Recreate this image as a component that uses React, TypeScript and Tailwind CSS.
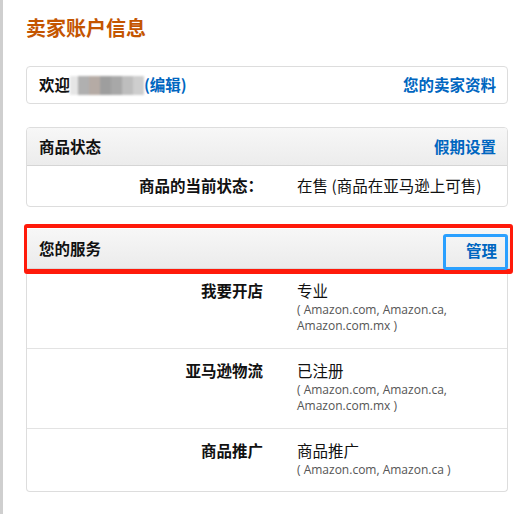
import React from 'react';

const font = { fontFamily: '"Noto Sans CJK SC", "Liberation Sans", sans-serif' };

interface ServiceRowProps {
  label: string;
  value: string;
  sites: string[];
  first?: boolean;
  last?: boolean;
}

const ServiceRow: React.FC<ServiceRowProps> = ({ label, value, sites, first, last }) => (
  <div
    className={`flex ${first ? 'pt-[5px]' : 'pt-[10px]'} ${last ? 'pb-[13px]' : 'pb-[14px] border-b border-[#e3e3e3]'}`}
  >
    <div className="w-[236px] text-right font-bold text-[15.5px] leading-[22px] text-[#111]">{label}</div>
    <div className="ml-[34px]">
      <div className="text-[15.5px] leading-[22px] text-[#111] mb-[1px]">{value}</div>
      {sites.map((s) => (
        <div
          key={s}
          className="text-[12px] leading-[16px] text-[#555]"
          style={{ fontFamily: '"Open Sans", "Liberation Sans", sans-serif' }}
        >
          {s}
        </div>
      ))}
    </div>
  </div>
);

export default function App() {
  return (
    <div className="relative w-[532px] h-[514px] bg-white overflow-hidden" style={font}>
      <div className="absolute left-0 top-0 h-full w-[3px] bg-[#cfcfcf]" />
      <div className="pl-[26px] pr-[24px] pt-[14px]">
        <h1 className="text-[20px] leading-[28px] font-bold text-[#c45500]">卖家账户信息</h1>

        <div className="mt-[24px] h-[38px] flex items-center justify-between rounded-[4px] border border-[#dddddd] pl-[12px] pr-[11px]">
          <div className="flex items-center text-[15.5px] text-[#111] font-bold">
            <span>欢迎</span>
            <span className="flex h-[19px] blur-[1.2px] opacity-85">
              <span className="w-[8px] bg-[#e2e2e2]" />
              <span className="w-[11px] bg-[#a3a3a3]" />
              <span className="w-[11px] bg-[#a99d96]" />
              <span className="w-[11px] bg-[#8e8e8e]" />
              <span className="w-[11px] bg-[#999999]" />
              <span className="w-[11px] bg-[#b3b3b3]" />
              <span className="w-[11px] bg-[#c6c6c6]" />
            </span>
            <span className="text-[#0066c0]">(编辑)</span>
          </div>
          <span className="text-[15.5px] font-bold text-[#0066c0]">您的卖家资料</span>
        </div>

        <div className="mt-[23px] rounded-[4px] border border-[#dddddd] overflow-hidden">
          <div className="h-[38px] flex items-center justify-between pl-[12px] pr-[11px] bg-gradient-to-b from-[#f7f7f7] to-[#ececec] border-b border-[#d5d5d5]">
            <span className="text-[15.5px] font-bold text-[#111]">商品状态</span>
            <span className="text-[15.5px] font-bold text-[#0066c0]">假期设置</span>
          </div>
          <div className="h-[40px] flex items-center">
            <div className="w-[236px] text-right font-bold text-[15.5px] text-[#111]">商品的当前状态：</div>
            <div className="ml-[34px] text-[15.5px] text-[#111]">在售 (商品在亚马逊上可售)</div>
          </div>
        </div>

        <div className="relative mt-[17px] -ml-[2px] -mr-[5px] border-x-[3px] border-t-[4px] border-b-[5px] border-[#ff1a0a] rounded-[3px] pt-[1px]">
          <div className="h-[40px] flex items-center pl-[12px] border-b border-[#d8d8d8] bg-gradient-to-b from-[#f7f7f7] to-[#ebebeb]">
            <span className="text-[15.5px] font-bold text-[#111]">您的服务</span>
          </div>
          <span className="absolute top-[6px] right-[2px] h-[36px] w-[65px] flex items-start justify-end pt-[2px] pr-[8px] rounded-[3px] border-[3px] border-[#2aa0ff] text-[15.5px] leading-[22px] font-bold text-[#0066c0]">
            管理
          </span>
        </div>
        <div className="rounded-b-[4px] border border-t-0 border-[#dddddd]">
          <ServiceRow label="我要开店" value="专业" sites={['( Amazon.com, Amazon.ca,', 'Amazon.com.mx )']} first />
          <ServiceRow label="亚马逊物流" value="已注册" sites={['( Amazon.com, Amazon.ca,', 'Amazon.com.mx )']} />
          <ServiceRow label="商品推广" value="商品推广" sites={['( Amazon.com, Amazon.ca )']} last />
        </div>
      </div>
    </div>
  );
}
